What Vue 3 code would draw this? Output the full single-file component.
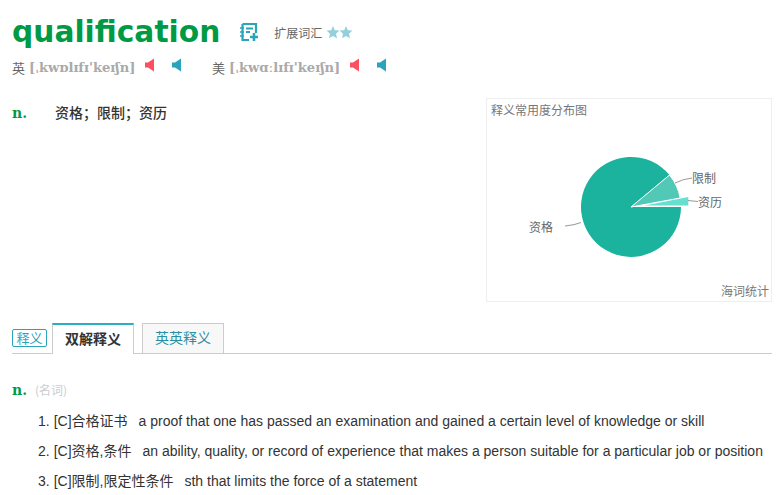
<script setup>
const defs = [
  { n: '1.', zh: '[C]合格证书', en: 'a proof that one has passed an examination and gained a certain level of knowledge or skill' },
  { n: '2.', zh: '[C]资格,条件', en: 'an ability, quality, or record of experience that makes a person suitable for a particular job or position' },
  { n: '3.', zh: '[C]限制,限定性条件', en: 'sth that limits the force of a statement' }
]
const prons = [
  { label: '英', ipa: "[ˌkwɒlɪfɪ'keɪʃn]" },
  { label: '美', ipa: "[ˌkwɑːlɪfɪ'keɪʃn]" }
]
</script>

<template>
  <div class="page">
    <header class="head">
      <h1 class="word">qualification</h1>
      <svg class="note" width="20" height="20" viewBox="0 0 20 20" fill="none">
        <path d="M3.5 2H17v9M10 18H3.5V2" stroke="#2aa4bb" stroke-width="2.2" />
        <path d="M1 6h4M1 10h4M1 14h4" stroke="#2aa4bb" stroke-width="1.6" />
        <path d="M7 6.500h7M7 10h4" stroke="#2aa4bb" stroke-width="1.8" />
        <path d="M15 11v8M11 15h8" stroke="#2aa4bb" stroke-width="2.6" />
      </svg>
      <span class="ext">扩展词汇</span>
      <svg class="stars" width="27" height="14" viewBox="0 0 27 14">
        <polygon fill="#93cfdd" points="7,1 8.800,5.200 13.500,5.600 10,8.700 11,13.300 7,10.900 3,13.300 4,8.700 0.500,5.600 5.200,5.200" />
        <polygon fill="#93cfdd" points="20,1 21.800,5.200 26.500,5.600 23,8.700 24,13.300 20,10.900 16,13.300 17,8.700 13.500,5.600 18.200,5.200" />
      </svg>
    </header>

    <div class="prons">
      <div v-for="p in prons" :key="p.label" class="pron">
        <span class="lab">{{ p.label }}</span>
        <span class="ipa">{{ p.ipa }}</span>
        <svg class="spk" width="10" height="14" viewBox="0 0 10 14"><path fill="#fc4f61" d="M0 4.500h3L9 0.500v13L3 9.500H0z" /></svg>
        <svg class="spk second" width="10" height="14" viewBox="0 0 10 14"><path fill="#2aa4bb" d="M0 4.500h3L9 0.500v13L3 9.500H0z" /></svg>
      </div>
    </div>

    <section class="main">
      <div class="brief">
        <span class="pos">n.</span>
        <span class="brief-text">资格；限制；资历</span>
      </div>
      <div class="card">
        <div class="card-title">释义常用度分布图</div>
        <svg class="pie" width="284" height="202" viewBox="0 0 284 202">
          <path d="M144 108 L194 108 A50 50 0 1 1 182.500 76 Z" fill="#1bb39e" />
          <path d="M144 108 L182.500 76 A50 50 0 0 1 193.200 99 Z" fill="#52c8b6" stroke="#fff" stroke-width="1" />
          <path d="M158 106.500 L201.300 98 L201.300 106.500 Z" fill="#65e0d0" />
          <path d="M78 127 Q88 126 94 123.500" fill="none" stroke="#999" />
          <path d="M188 84 Q196 80 205 79" fill="none" stroke="#999" />
          <path d="M201 101.500 Q206 102 211 102.500" fill="none" stroke="#999" />
          <text x="42" y="133" class="lbl">资格</text>
          <text x="205" y="84" class="lbl">限制</text>
          <text x="211" y="108" class="lbl">资历</text>
        </svg>
        <div class="card-foot">海词统计</div>
      </div>
    </section>

    <nav class="tabs">
      <span class="tag">释义</span>
      <span class="tab active">双解释义</span>
      <span class="tab">英英释义</span>
    </nav>

    <section class="detail">
      <div class="detail-head">
        <span class="pos">n.</span>
        <span class="pos-zh">(名词)</span>
      </div>
      <ol class="list">
        <li v-for="d in defs" :key="d.n">
          <span class="num">{{ d.n }}</span>
          <span>{{ d.zh }}</span>
          <span class="en">{{ d.en }}</span>
        </li>
      </ol>
    </section>
  </div>
</template>

<style>
html, body { margin: 0; padding: 0; background: #fff; overflow: hidden; }
</style>

<style scoped>
.page {
  width: 760px;
  height: 495px;
  padding: 0 5px 0 12px;
  overflow: hidden;
  font-family: "Liberation Sans", "Noto Sans CJK SC", sans-serif;
  color: #333;
  font-size: 14px;
}
.head { display: flex; align-items: center; height: 32px; padding-top: 16px; }
.word {
  margin: 0;
  font-family: "DejaVu Sans", sans-serif;
  font-weight: 700;
  font-size: 29.7px;
  line-height: 32px;
  color: #009a44;
}
.note { margin-left: 19px; }
.ext { margin-left: 15px; font-size: 12px; color: #666; font-family: "Noto Sans CJK SC", sans-serif; }
.stars { margin-left: 4px; }
.prons { display: flex; height: 20px; margin-top: 9px; align-items: center; }
.pron { display: flex; align-items: center; width: 200px; }
.lab { font-size: 13px; color: #666; font-family: "Noto Sans CJK SC", sans-serif; margin-right: 4px; }
.ipa { font-family: "DejaVu Serif", serif; font-weight: 700; font-size: 13.1px; color: #aaa; }
.spk { margin-left: 10px; margin-top: -4px; }
.spk.second { margin-left: 17px; }
.main { display: flex; justify-content: space-between; margin-top: 21px; height: 204px; }
.brief { display: flex; align-items: baseline; padding-top: 4px; }
.pos { font-family: "DejaVu Serif", serif; font-weight: 700; font-size: 14px; color: #009a44; }
.brief-text { margin-left: 28px; font-size: 14px; font-weight: 500; color: #333; font-family: "Noto Sans CJK SC", sans-serif; }
.card {
  position: relative;
  box-sizing: border-box;
  width: 286px;
  height: 204px;
  border: 1px solid #eee;
  color: #777;
  font-family: "Noto Sans CJK SC", sans-serif;
  font-size: 12px;
}
.card-title { position: absolute; left: 4px; top: 2px; }
.card-foot { position: absolute; right: 2px; bottom: 2px; }
.pie { display: block; }
.lbl { font-size: 12px; fill: #666; }
.tabs { display: flex; align-items: flex-end; height: 30px; margin-top: 21px; border-bottom: 1px solid #ccc; width: 760px; }
.tag {
  box-sizing: border-box;
  height: 18px;
  width: 35px;
  margin-bottom: 6px;
  border: 1px solid #2aa4bb;
  border-radius: 2px;
  text-align: center;
  line-height: 15px;
  font-size: 13px;
  color: #2aa4bb;
  font-family: "Noto Sans CJK SC", sans-serif;
}
.tab {
  box-sizing: border-box;
  width: 82px;
  height: 30px;
  margin-left: 8px;
  border: 1px solid #ccc;
  border-bottom: none;
  background: #f8f8f8;
  text-align: center;
  line-height: 26px;
  font-size: 14px;
  color: #2a8fa3;
  font-family: "Noto Sans CJK SC", sans-serif;
}
.tab.active {
  margin-left: 5px;
  height: 31px;
  margin-bottom: -1px;
  background: #fff;
  border-top: 2px solid #2aaec4;
  color: #333;
  font-weight: 700;
  line-height: 26px;
}
.detail-head { margin-top: 27px; height: 20px; display: flex; align-items: baseline; }
.pos-zh { margin-left: 8px; font-size: 12px; color: #ccc; font-family: "Noto Sans CJK SC", sans-serif; }
.list { list-style: none; margin: 5px 0 0; padding: 0 0 0 26px; }
.list li { height: 30px; line-height: 30px; font-size: 14px; white-space: nowrap; color: #333; }
.num { margin-right: 4px; }
.en { margin-left: 11px; }
</style>
